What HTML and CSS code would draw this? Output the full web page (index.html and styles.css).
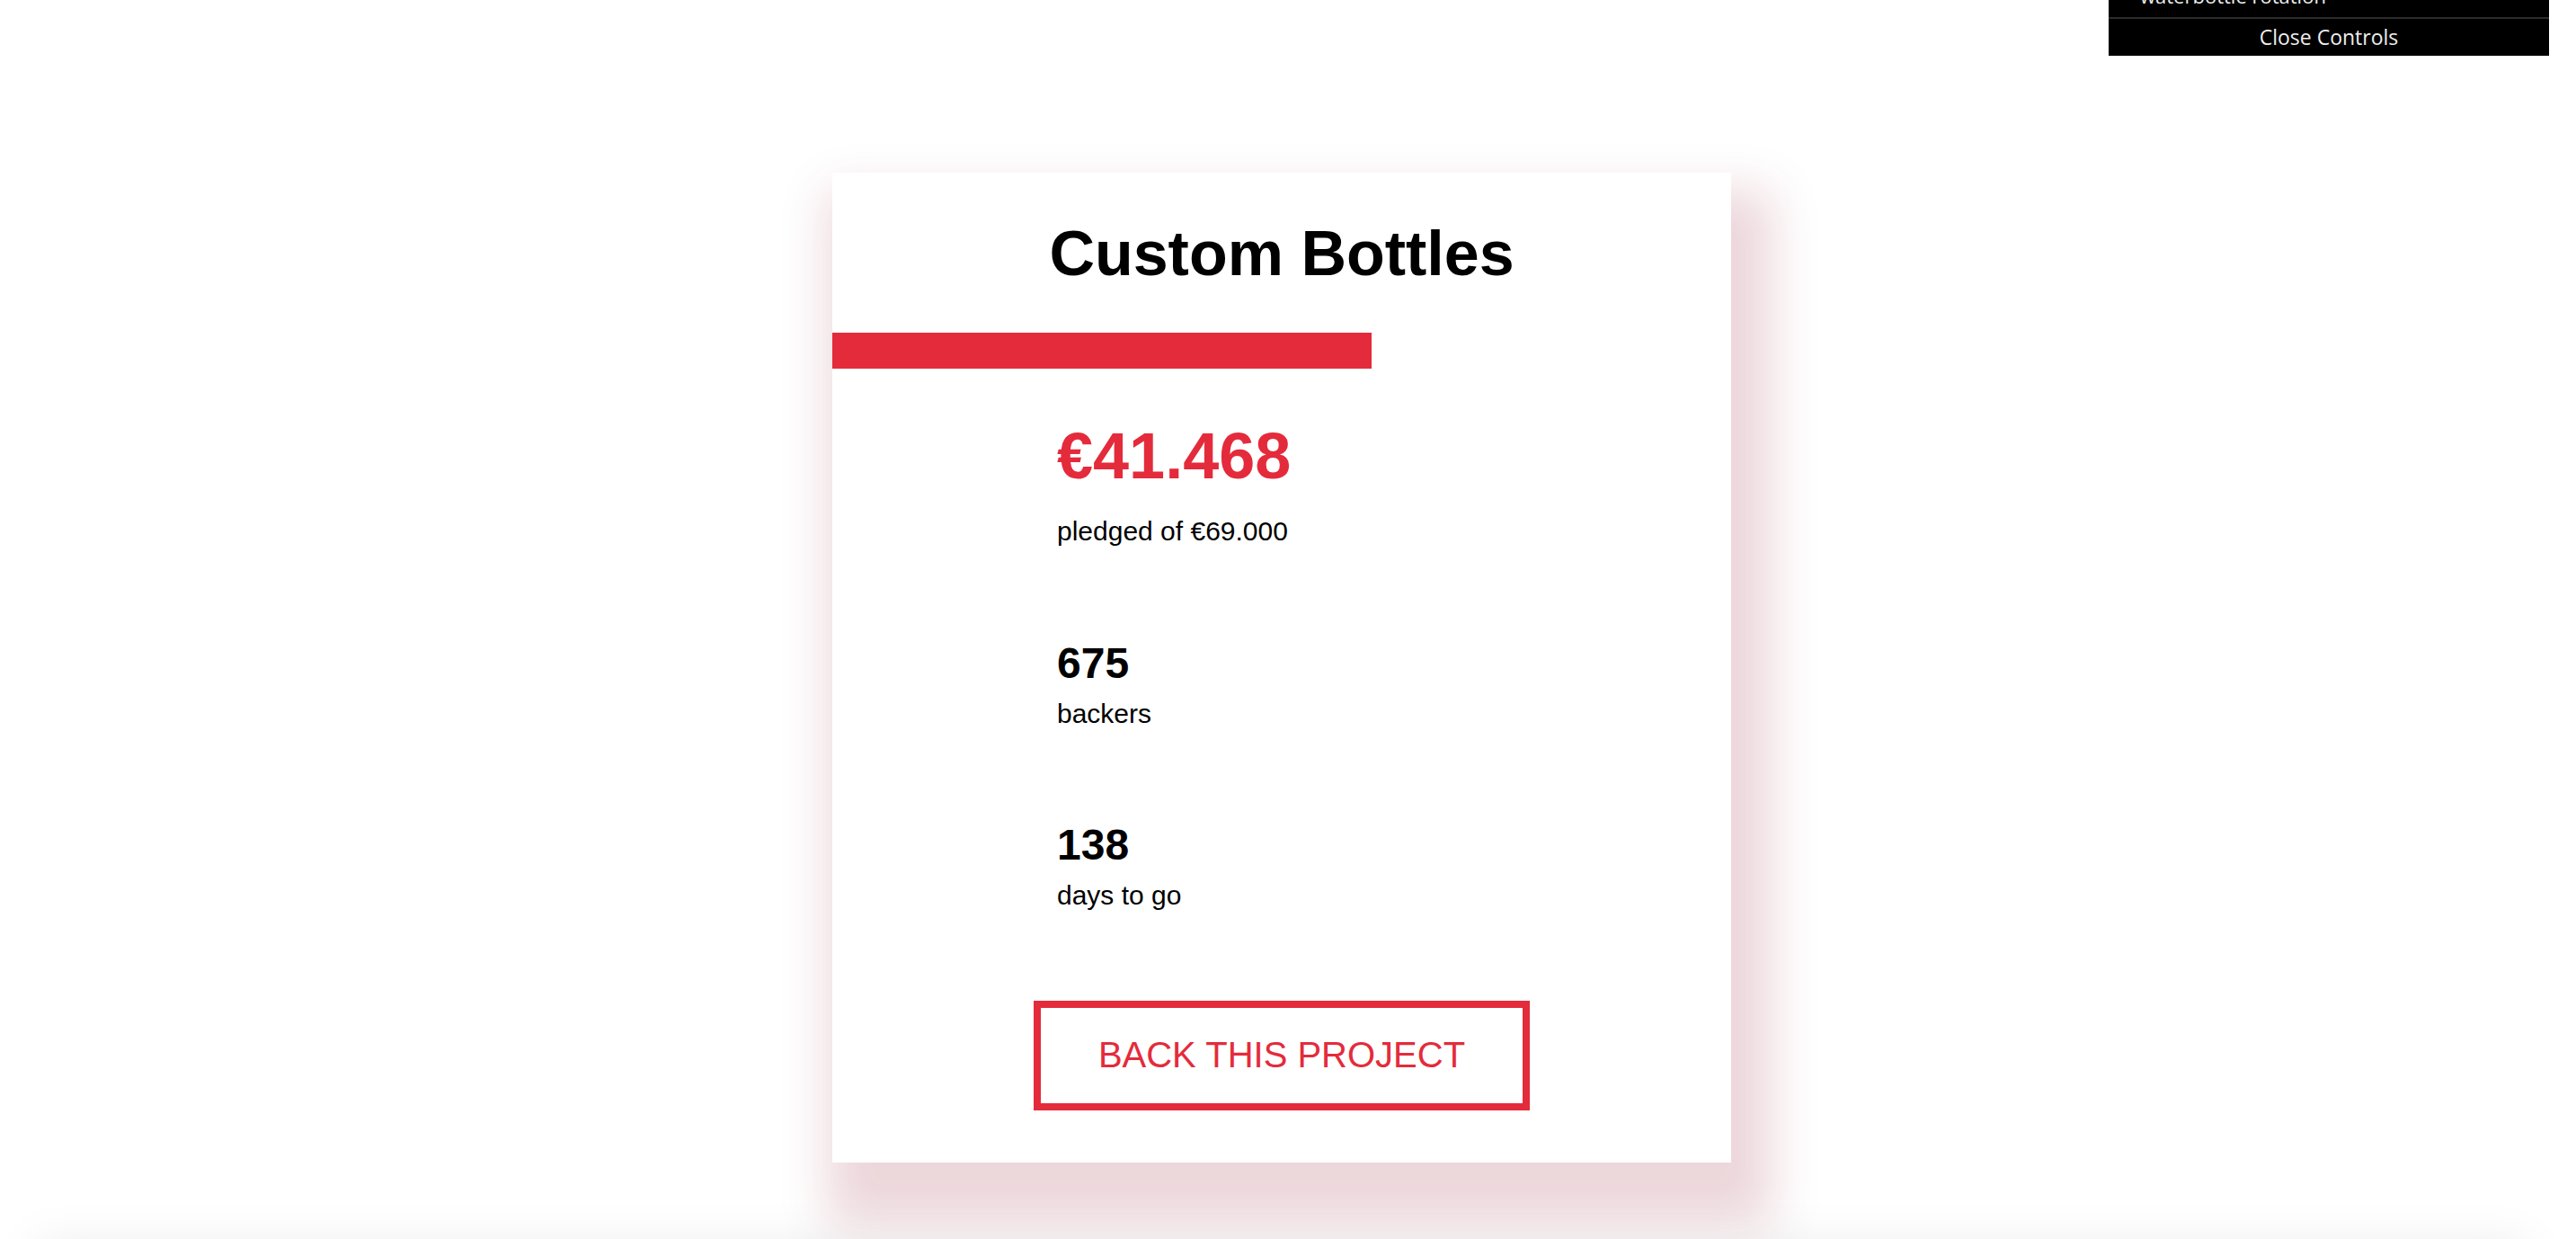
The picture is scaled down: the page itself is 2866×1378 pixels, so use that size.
FILE: index.html
```html
<!DOCTYPE html>
<html lang="en">
<head>
<meta charset="utf-8">
<title>Custom Bottles</title>
<link rel="stylesheet" href="styles.css">
</head>
<body>
<div class="gui">
  <div class="gui-row"><span class="gui-label">waterbottle rotation</span></div>
  <div class="gui-close">Close Controls</div>
</div>
<main class="page">
  <section class="card">
    <h1 class="card-title">Custom Bottles</h1>
    <div class="progress"><div class="progress-fill" style="width:60%"></div></div>
    <div class="stats">
      <div class="stat">
        <div class="stat-value stat-value--main">€41.468</div>
        <div class="stat-label stat-label--main">pledged of €69.000</div>
      </div>
      <div class="stat stat--spaced">
        <div class="stat-value">675</div>
        <div class="stat-label">backers</div>
      </div>
      <div class="stat stat--spaced">
        <div class="stat-value">138</div>
        <div class="stat-label">days to go</div>
      </div>
    </div>
    <div class="actions">
      <button class="back-btn" type="button">BACK THIS PROJECT</button>
    </div>
  </section>
  <div class="below"></div>
</main>
</body>
</html>
```

FILE: styles.css
```css
html, body {
  margin: 0;
  padding: 0;
  background: #ffffff;
}

body {
  font-family: "Liberation Sans", Arial, Helvetica, sans-serif;
  color: #000;
  overflow: hidden;
}

/* dat.GUI style overlay */
.gui {
  position: absolute;
  top: -33px;
  right: 30px;
  width: 490px;
  background: #000;
  font-family: "Open Sans", "DejaVu Sans", sans-serif;
  color: #eeeeee;
  z-index: 10;
}

.gui-row {
  height: 54px;
  border-bottom: 2px solid #2c2c2c;
  padding-left: 35px;
  box-sizing: border-box;
  display: flex;
  align-items: flex-end;
}

.gui-label {
  font-size: 22px;
  line-height: 22px;
  padding-bottom: 13px;
}

.gui-close {
  height: 41px;
  line-height: 41px;
  text-align: center;
  font-size: 23px;
}

.page {
  padding-top: 192px;
  padding-right: 14px;
}

.card {
  width: 1000px;
  margin: 0 auto;
  background: #fff;
  box-sizing: border-box;
  padding: 55px 0 58px;
  box-shadow: 20px 45px 50px 25px rgba(140, 20, 40, 0.17);
  position: relative;
  z-index: 1;
}

.card-title {
  margin: 0;
  font-size: 70px;
  line-height: 70px;
  font-weight: 700;
  text-align: center;
}

.progress {
  margin-top: 53px;
  height: 40px;
}

.progress-fill {
  height: 100%;
  background: #e42b3b;
}

.stats {
  margin-top: 61px;
  padding: 0 250px;
}

.stat--spaced {
  margin-top: 108px;
}

.stat--spaced + .stat--spaced {
  margin-top: 107px;
}

.stat-value {
  font-size: 48px;
  line-height: 48px;
  font-weight: 700;
}

.stat-value--main {
  font-size: 72px;
  line-height: 72px;
  color: #e42b3b;
}

.stat-label {
  margin-top: 17px;
  font-size: 30px;
  line-height: 30px;
}

.stat-label--main {
  margin-top: 33px;
}

.actions {
  margin-top: 102px;
  display: flex;
  justify-content: center;
}

.back-btn {
  font-family: "Liberation Sans", Arial, Helvetica, sans-serif;
  font-size: 40px;
  line-height: 40px;
  color: #e42b3b;
  background: #fff;
  border: 8px solid #e42b3b;
  padding: 32px 64px 34px;
  margin: 0;
  border-radius: 0;
  cursor: pointer;
}

.below {
  margin: 90px 40px 0;
  height: 400px;
  background: #fff;
  box-shadow: 0 0 50px rgba(0, 0, 0, 0.08);
  position: relative;
  z-index: 2;
}
```
